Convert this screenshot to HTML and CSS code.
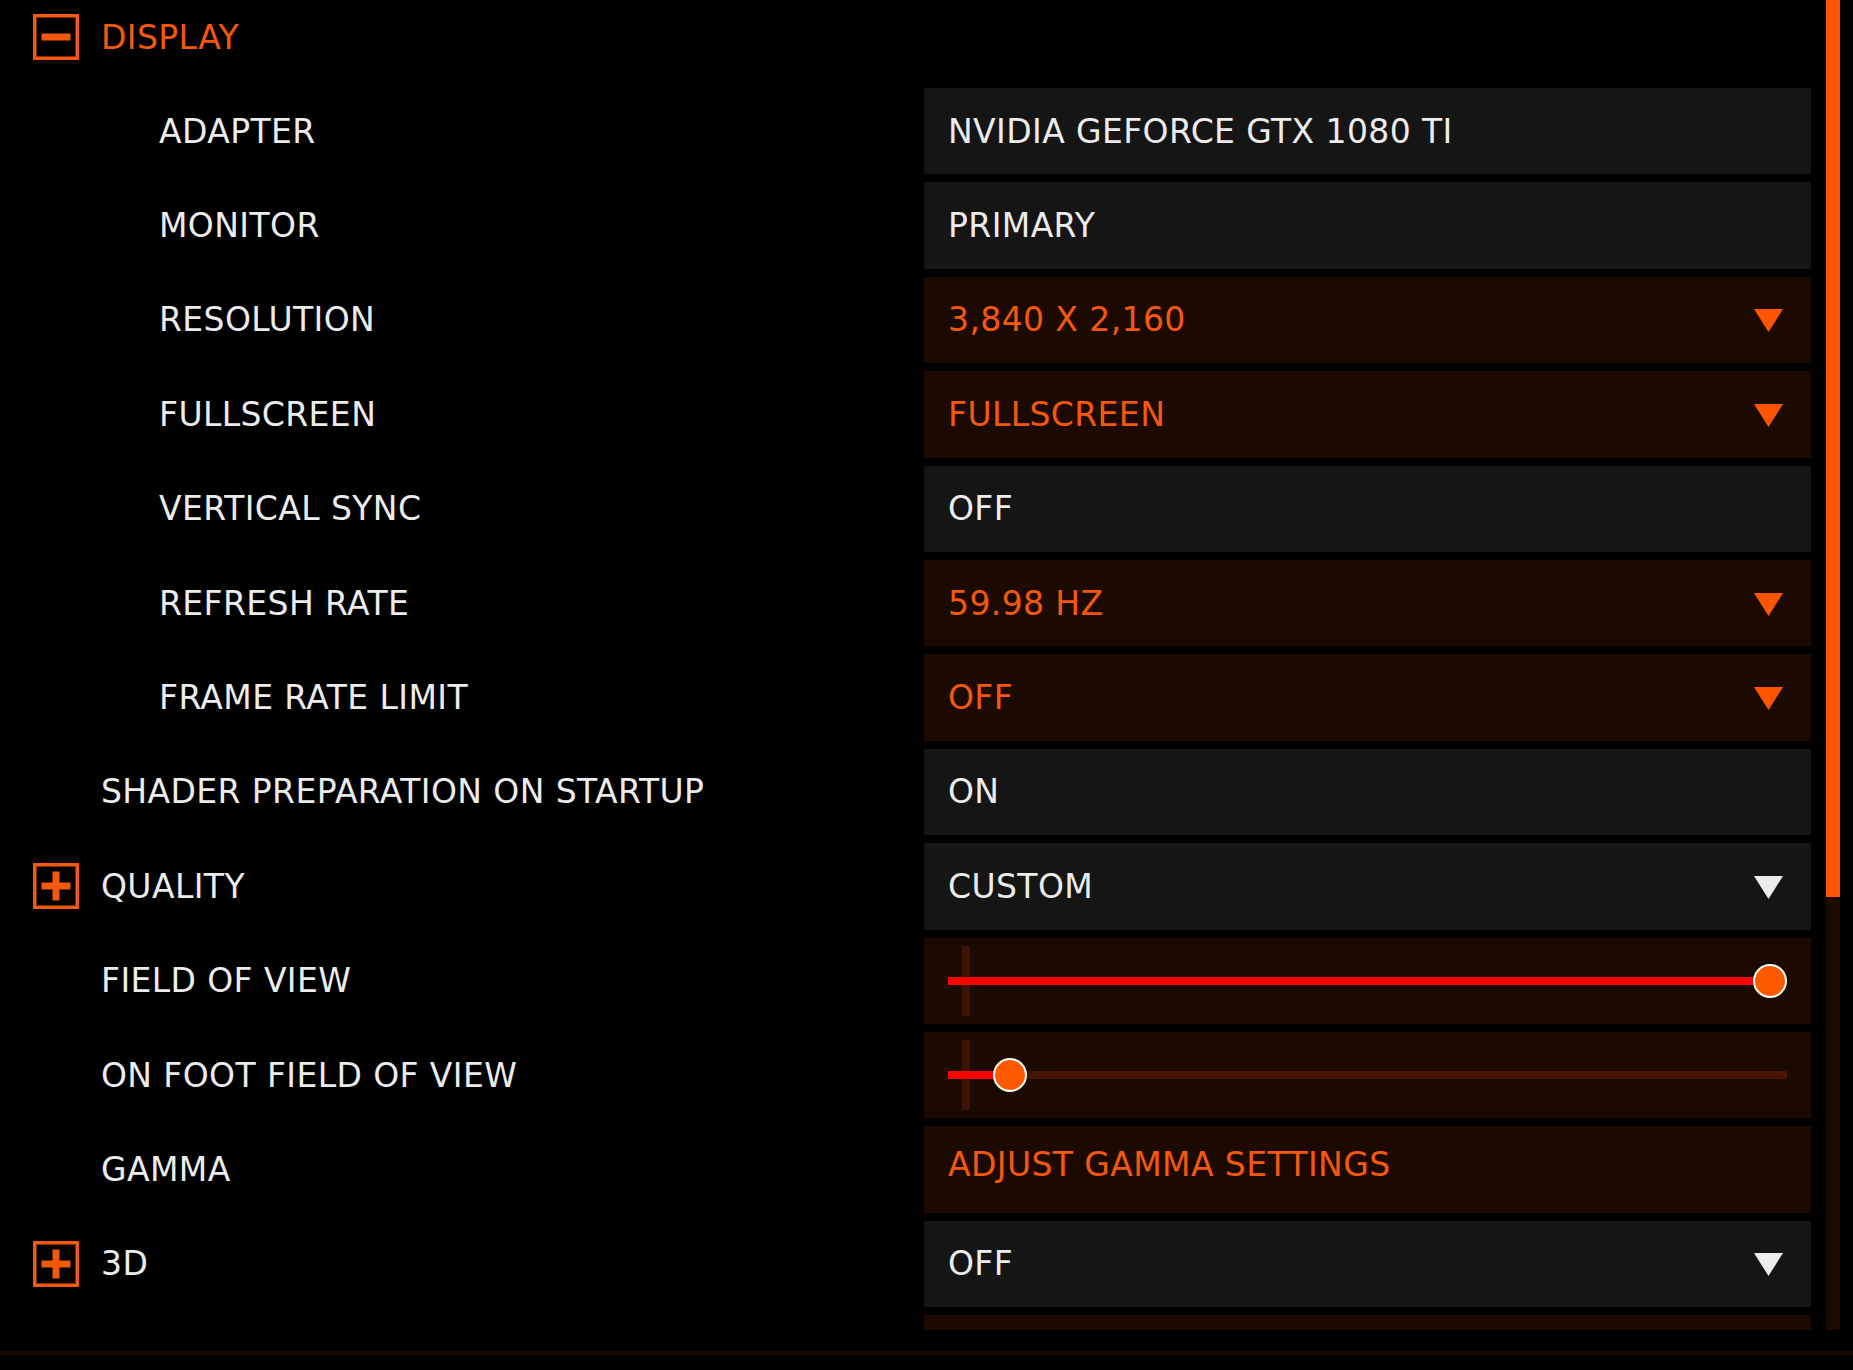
FILE: index.html
```html
<!DOCTYPE html>
<html>
    <head>
        <title>Graphics Options</title>
        <link rel="stylesheet" href="styles.css">
    </head>

    <body>
        <div class="viewport">
            <div class="list">
                <div class="section-head">
                    <svg class="toggle" width="46" height="46" viewBox="0 0 46 46">
                        <rect x="1.75" y="1.75" width="42.5" height="42.5" />
                        <rect class="bar" x="8.5" y="19.5" width="29" height="7" />
                    </svg>
                    <span>DISPLAY</span>
                </div>

                <div class="row">
                    <div class="label sub">ADAPTER</div>
                    <div class="value"><span class="text">NVIDIA GEFORCE GTX 1080 TI</span></div>
                </div>
                <div class="row">
                    <div class="label sub">MONITOR</div>
                    <div class="value"><span class="text">PRIMARY</span></div>
                </div>
                <div class="row">
                    <div class="label sub">RESOLUTION</div>
                    <div class="value active">
                        <span class="text">3,840 X 2,160</span>
                        <svg class="arrow" width="29" height="23" viewBox="0 0 29 23"><polygon points="0,0 29,0 14.5,23" /></svg>
                    </div>
                </div>
                <div class="row">
                    <div class="label sub">FULLSCREEN</div>
                    <div class="value active">
                        <span class="text">FULLSCREEN</span>
                        <svg class="arrow" width="29" height="23" viewBox="0 0 29 23"><polygon points="0,0 29,0 14.5,23" /></svg>
                    </div>
                </div>
                <div class="row">
                    <div class="label sub">VERTICAL SYNC</div>
                    <div class="value"><span class="text">OFF</span></div>
                </div>
                <div class="row">
                    <div class="label sub">REFRESH RATE</div>
                    <div class="value active">
                        <span class="text">59.98 HZ</span>
                        <svg class="arrow" width="29" height="23" viewBox="0 0 29 23"><polygon points="0,0 29,0 14.5,23" /></svg>
                    </div>
                </div>
                <div class="row">
                    <div class="label sub">FRAME RATE LIMIT</div>
                    <div class="value active">
                        <span class="text">OFF</span>
                        <svg class="arrow" width="29" height="23" viewBox="0 0 29 23"><polygon points="0,0 29,0 14.5,23" /></svg>
                    </div>
                </div>
                <div class="row">
                    <div class="label">SHADER PREPARATION ON STARTUP</div>
                    <div class="value"><span class="text">ON</span></div>
                </div>
                <div class="row">
                    <div class="label group">
                        <svg class="toggle" width="46" height="46" viewBox="0 0 46 46">
                            <rect x="1.75" y="1.75" width="42.5" height="42.5" />
                            <rect class="bar" x="8.5" y="19.5" width="29" height="7" />
                            <rect class="bar" x="19.5" y="8.5" width="7" height="29" />
                        </svg>
                        <span>QUALITY</span>
                    </div>
                    <div class="value">
                        <span class="text">CUSTOM</span>
                        <svg class="arrow" width="29" height="23" viewBox="0 0 29 23"><polygon points="0,0 29,0 14.5,23" /></svg>
                    </div>
                </div>
                <div class="row">
                    <div class="label">FIELD OF VIEW</div>
                    <div class="value active slider">
                        <div class="track">
                            <span class="tick"></span>
                            <div class="range">
                                <span class="fill" style="width: 100%"></span>
                                <span class="knob" style="left: 100%"></span>
                            </div>
                        </div>
                    </div>
                </div>
                <div class="row">
                    <div class="label">ON FOOT FIELD OF VIEW</div>
                    <div class="value active slider">
                        <div class="track">
                            <span class="tick"></span>
                            <div class="range">
                                <span class="fill" style="width: 7.5%"></span>
                                <span class="knob" style="left: 7.5%"></span>
                            </div>
                        </div>
                    </div>
                </div>
                <div class="row">
                    <div class="label">GAMMA</div>
                    <div class="value active"><span class="text raised">ADJUST GAMMA SETTINGS</span></div>
                </div>
                <div class="row">
                    <div class="label group">
                        <svg class="toggle" width="46" height="46" viewBox="0 0 46 46">
                            <rect x="1.75" y="1.75" width="42.5" height="42.5" />
                            <rect class="bar" x="8.5" y="19.5" width="29" height="7" />
                            <rect class="bar" x="19.5" y="8.5" width="7" height="29" />
                        </svg>
                        <span>3D</span>
                    </div>
                    <div class="value">
                        <span class="text">OFF</span>
                        <svg class="arrow" width="29" height="23" viewBox="0 0 29 23"><polygon points="0,0 29,0 14.5,23" /></svg>
                    </div>
                </div>
                <div class="row">
                    <div class="label"></div>
                    <div class="value active"></div>
                </div>
            </div>

            <div class="scrollbar">
                <div class="thumb"></div>
            </div>
        </div>
        <div class="footer-line"></div>
    </body>
</html>
```

FILE: styles.css
```css
html,
body {
    margin: 0;
    background-color: #000;
}

body {
    width: 1853px;
    height: 1370px;
    overflow: hidden;
    font-family: "DejaVu Sans", sans-serif;
    font-size: 33px;
    letter-spacing: 0.4px;
    color: #ececec;
}

.viewport {
    display: flex;
    height: 1330px;
    overflow: hidden;
}

.list {
    width: 1811px;
}

.scrollbar {
    width: 14px;
    margin-left: 15px;
    background-color: #1c0a00;
}

.thumb {
    height: 897px;
    background-color: #ff5500;
}

.footer-line {
    height: 4px;
    margin-top: 21px;
    background-color: #1c0a00;
}

/* section title with collapse box */
.section-head {
    display: flex;
    align-items: center;
    height: 74px;
    margin-bottom: 14px;
    padding-left: 33px;
    color: #f4580c;
}

.toggle {
    flex: none;
    margin-right: 22px;
}

.toggle rect {
    fill: none;
    stroke: #f4580c;
    stroke-width: 3.5;
}

.toggle .bar {
    fill: #f4580c;
    stroke: none;
}

/* one setting */
.row {
    display: grid;
    grid-template-columns: 924px 887px;
    height: 86.4px;
    margin-bottom: 8px;
}

.label {
    display: flex;
    align-items: center;
    padding-left: 101px;
}

.label.sub {
    padding-left: 159px;
}

.label.group {
    padding-left: 33px;
}

.value {
    display: flex;
    align-items: center;
    padding: 0 28px 0 24px;
    background-color: #151515;
    color: #ececec;
}

.value.active {
    background-color: #1c0a00;
    color: #f4580c;
}

.value .text {
    flex: 1;
}

.value .text.raised {
    margin-bottom: 10px;
}

.arrow {
    flex: none;
    margin-top: 2px;
    fill: currentColor;
}

.value.active .arrow {
    fill: #ff5500;
}

/* sliders */
.value.slider {
    padding: 0 24px;
}

.track {
    position: relative;
    flex: 1;
    height: 8px;
    background-color: #441500;
}

.tick {
    position: absolute;
    left: 14px;
    top: -31px;
    width: 8px;
    height: 70px;
    background-color: #3a1404;
}

.range {
    position: absolute;
    top: 0;
    left: 0;
    right: 17px;
    height: 8px;
}

.fill {
    position: absolute;
    left: 0;
    top: 0;
    height: 8px;
    background-color: #ff0000;
}

.knob {
    position: absolute;
    top: 4px;
    width: 30px;
    height: 30px;
    border: 2.5px solid #fff;
    border-radius: 50%;
    background-color: #ff5a00;
    transform: translate(-50%, -50%);
}
```
